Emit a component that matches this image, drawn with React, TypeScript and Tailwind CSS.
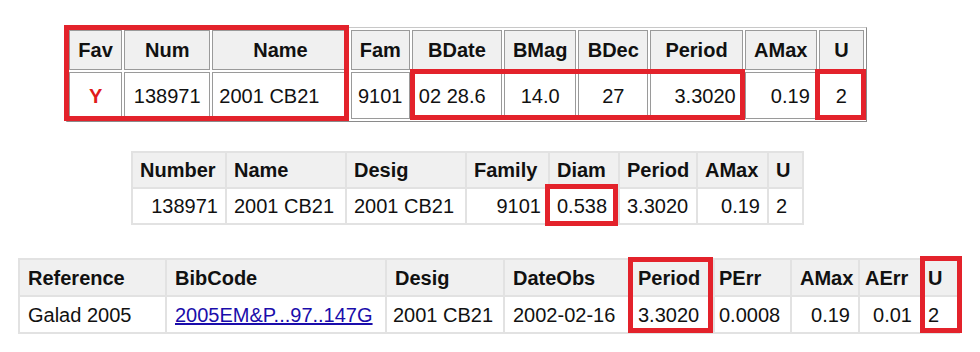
import React from "react";

const font = { fontFamily: '"Liberation Sans", Arial, sans-serif' };

function RedBox({ cls }: { cls: string }) {
  return <div className={`absolute border-[5px] border-[#e3222b] pointer-events-none ${cls}`} />;
}

export default function App() {
  const t1h = "border border-[#9a9a9a] bg-[#f0f0f0] h-[40px] font-bold text-center px-[4px]";
  const t1d = "border border-[#9a9a9a] bg-white h-[47px] px-[6px]";
  const t2h = "border-2 border-[#e2e2e2] bg-[#f0f0f0] h-[36px] font-bold text-left px-[7px]";
  const t2d = "border-2 border-[#e2e2e2] bg-white h-[36px] px-[7px]";
  const t3h = "border-2 border-[#e2e2e2] bg-[#f0f0f0] h-[37px] font-bold text-left px-[8px]";
  const t3d = "border-2 border-[#e2e2e2] bg-white h-[37px] px-[8px]";
  return (
    <div className="relative w-[980px] h-[352px] bg-white text-[20px] text-[#111] overflow-hidden" style={font}>
      <div className="pt-[27px] pl-[66px]">
        <table className="border-separate border-spacing-[2px] border border-t-[#c8c8c8] border-l-[#c8c8c8] border-r-[#8a8a8a] border-b-[#8a8a8a] table-fixed w-[801px] leading-none">
          <colgroup>
            <col className="w-[53px]" />
            <col className="w-[86px]" />
            <col className="w-[136px]" />
            <col className="w-[59px]" />
            <col className="w-[90px]" />
            <col className="w-[72px]" />
            <col className="w-[70px]" />
            <col className="w-[92px]" />
            <col className="w-[72px]" />
            <col className="w-[45px]" />
          </colgroup>
          <thead>
            <tr>
              <th className={t1h}>Fav</th>
              <th className={t1h}>Num</th>
              <th className={t1h}>Name</th>
              <th className={t1h}>Fam</th>
              <th className={t1h}>BDate</th>
              <th className={t1h}>BMag</th>
              <th className={t1h}>BDec</th>
              <th className={t1h}>Period</th>
              <th className={t1h}>AMax</th>
              <th className={t1h}>U</th>
            </tr>
          </thead>
          <tbody>
            <tr>
              <td className={`${t1d} text-center font-bold text-[#e01b1b]`}>Y</td>
              <td className={`${t1d} text-center`}>138971</td>
              <td className={`${t1d} text-left`}>2001 CB21</td>
              <td className={`${t1d} text-center`}>9101</td>
              <td className={`${t1d} text-left`}>02 28.6</td>
              <td className={`${t1d} text-center`}>14.0</td>
              <td className={`${t1d} text-center`}>27</td>
              <td className={`${t1d} text-right`}>3.3020</td>
              <td className={`${t1d} text-right`}>0.19</td>
              <td className={`${t1d} text-center`}>2</td>
            </tr>
          </tbody>
        </table>
      </div>

      <div className="pt-[29px] pl-[131px]">
        <table className="border-collapse table-fixed w-[671px] leading-none">
          <colgroup>
            <col className="w-[94px]" />
            <col className="w-[120px]" />
            <col className="w-[120px]" />
            <col className="w-[83px]" />
            <col className="w-[70px]" />
            <col className="w-[78px]" />
            <col className="w-[71px]" />
            <col className="w-[35px]" />
          </colgroup>
          <thead>
            <tr>
              <th className={t2h}>Number</th>
              <th className={t2h}>Name</th>
              <th className={t2h}>Desig</th>
              <th className={t2h}>Family</th>
              <th className={t2h}>Diam</th>
              <th className={t2h}>Period</th>
              <th className={t2h}>AMax</th>
              <th className={t2h}>U</th>
            </tr>
          </thead>
          <tbody>
            <tr>
              <td className={`${t2d} text-right`}>138971</td>
              <td className={`${t2d} text-left`}>2001 CB21</td>
              <td className={`${t2d} text-left`}>2001 CB21</td>
              <td className={`${t2d} text-right`}>9101</td>
              <td className={`${t2d} text-left`}>0.538</td>
              <td className={`${t2d} text-left`}>3.3020</td>
              <td className={`${t2d} text-right`}>0.19</td>
              <td className={`${t2d} text-left`}>2</td>
            </tr>
          </tbody>
        </table>
      </div>

      <div className="pt-[33px] pl-[18px]">
        <table className="border-collapse table-fixed w-[940px] leading-none">
          <colgroup>
            <col className="w-[147px]" />
            <col className="w-[220px]" />
            <col className="w-[118px]" />
            <col className="w-[125px]" />
            <col className="w-[85px]" />
            <col className="w-[77px]" />
            <col className="w-[68px]" />
            <col className="w-[62px]" />
            <col className="w-[38px]" />
          </colgroup>
          <thead>
            <tr>
              <th className={t3h}>Reference</th>
              <th className={t3h}>BibCode</th>
              <th className={t3h}>Desig</th>
              <th className={t3h}>DateObs</th>
              <th className={t3h}>Period</th>
              <th className={`${t3h} !px-[4px]`}>PErr</th>
              <th className={t3h}>AMax</th>
              <th className={`${t3h} !px-[5px]`}>AErr</th>
              <th className={`${t3h} !px-[6px]`}>U</th>
            </tr>
          </thead>
          <tbody>
            <tr>
              <td className={`${t3d} text-left`}>Galad 2005</td>
              <td className={`${t3d} text-left`}>
                <a href="#" className="text-[#1a0dab] underline">2005EM&amp;P...97..147G</a>
              </td>
              <td className={`${t3d} text-left !px-[6px]`}>2001 CB21</td>
              <td className={`${t3d} text-left`}>2002-02-16</td>
              <td className={`${t3d} text-left`}>3.3020</td>
              <td className={`${t3d} text-left !px-[4px]`}>0.0008</td>
              <td className={`${t3d} text-right`}>0.19</td>
              <td className={`${t3d} text-right`}>0.01</td>
              <td className={`${t3d} text-left !px-[6px]`}>2</td>
            </tr>
          </tbody>
        </table>
      </div>

      <RedBox cls="left-[64px] top-[25px] w-[285px] h-[96px]" />
      <RedBox cls="left-[410px] top-[69px] w-[335px] h-[51px]" />
      <RedBox cls="left-[815px] top-[69px] w-[51px] h-[51px]" />
      <RedBox cls="left-[545px] top-[184px] w-[73px] h-[42px]" />
      <RedBox cls="left-[628px] top-[257px] w-[85px] h-[76px]" />
      <RedBox cls="left-[920px] top-[256px] w-[42px] h-[77px]" />
    </div>
  );
}
